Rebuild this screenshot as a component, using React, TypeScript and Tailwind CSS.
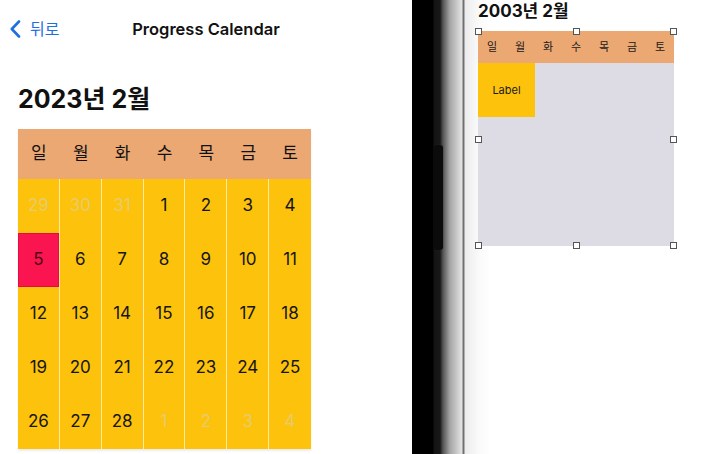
import React from 'react'

const FONT = { fontFamily: 'Inter, "Noto Sans CJK KR", sans-serif' }

const WEEKDAYS = ['일', '월', '화', '수', '목', '금', '토']

interface DayCell {
  label: number
  muted?: boolean
  today?: boolean
}

// Feb 2023 grid, padded with prev/next month days
const days: DayCell[] = [
  { label: 29, muted: true },
  { label: 30, muted: true },
  { label: 31, muted: true },
  ...Array.from({ length: 28 }, (_, i) => ({ label: i + 1, today: i + 1 === 5 })),
  { label: 1, muted: true },
  { label: 2, muted: true },
  { label: 3, muted: true },
  { label: 4, muted: true },
]

function BackButton() {
  return (
    <div className="flex items-center gap-[9px] pl-[10px] text-[#1f6fe0]">
      <svg width="11" height="18" viewBox="0 0 11 18" fill="none">
        <path d="M9 1.5L1.8 9L9 16.5" stroke="currentColor" strokeWidth="2.6" strokeLinecap="round" strokeLinejoin="round" />
      </svg>
      <span className="text-[16px] leading-none">뒤로</span>
    </div>
  )
}

function Calendar() {
  return (
    <div className="ml-[18px] w-[293px] shadow-[0_2px_2px_rgba(0,0,0,0.08)]">
      <div className="grid h-[50px] grid-cols-7 items-center bg-[#eca873]">
        {WEEKDAYS.map((d) => (
          <div key={d} className="text-center text-[17px] text-[#111]">
            {d}
          </div>
        ))}
      </div>
      <div className="grid grid-cols-7 bg-[#fdc20c]">
        {days.map((day, i) => {
          const lastCol = i % 7 === 6
          return (
            <div
              key={i}
              className={`flex h-[54px] items-center justify-center text-[17px] ${
                lastCol ? '' : 'border-r border-[#fde9a6]'
              } ${day.today ? 'bg-[#fa1450] text-[#4a0515] shadow-[inset_0_0_0_1px_#e00e45]' : ''} ${
                day.muted ? 'text-[#e8cb6a]' : day.today ? '' : 'text-[#151515]'
              }`}
            >
              {day.label}
            </div>
          )
        })}
      </div>
    </div>
  )
}

function Handle({ className }: { className: string }) {
  return <div className={`absolute h-[7px] w-[7px] border border-[#555] bg-white ${className}`} />
}

function StoryboardPanel() {
  return (
    <div className="flex-1 bg-[linear-gradient(to_right,#ececec,#fafafa_14px,#ffffff_26px)] pl-[13px]">
      <div className="h-[31px] text-[17px] font-bold leading-[22px] text-[#111]">2003년 2월</div>
      <div className="relative w-[196px]">
        <div className="grid h-[32px] grid-cols-7 items-center bg-[#eca873]">
          {WEEKDAYS.map((d) => (
            <div key={d} className="text-center text-[11px] text-[#1a1a1a]">
              {d}
            </div>
          ))}
        </div>
        <div className="h-[183px] bg-[#dddce4]">
          <div className="flex h-[54px] w-[57px] items-center justify-center bg-[#fdc20c] text-[11px] text-[#1a1a1a]">
            Label
          </div>
        </div>
        <Handle className="-left-[3px] -top-[3px]" />
        <Handle className="left-[95px] -top-[3px]" />
        <Handle className="-right-[3px] -top-[3px]" />
        <Handle className="-left-[3px] top-[105px]" />
        <Handle className="-right-[3px] top-[105px]" />
        <Handle className="-left-[3px] -bottom-[3px]" />
        <Handle className="left-[95px] -bottom-[3px]" />
        <Handle className="-right-[3px] -bottom-[3px]" />
      </div>
    </div>
  )
}

export default function App() {
  return (
    <div className="flex h-[454px] w-[707px] overflow-hidden bg-white" style={FONT}>
      {/* Simulator screen */}
      <div className="w-[412px] flex-none">
        <div className="grid h-[58px] grid-cols-[1fr_auto_1fr] items-center">
          <BackButton />
          <div className="text-[16.5px] font-semibold text-[#111]">Progress Calendar</div>
          <div />
        </div>
        <div className="flex h-[71px] items-center pl-[18px] pt-[13px] text-[25px] font-bold text-[#111]">
          2023년 2월
        </div>
        <Calendar />
      </div>

      {/* Device bezel */}
      <div className="relative w-[53px] flex-none bg-[linear-gradient(to_right,#000_0px,#000_21px,#141414_22px,#181818_28px,#555_31px,#a6a6a6_38px,#cfcfcf_46px,#e4e4e4_50px,#6f6f6f_51px,#6f6f6f_52px,#f0f0f0_53px)]">
        <div className="absolute left-[21px] top-[145px] h-[105px] w-[10px] rounded-[3px] bg-[#0b0b0b] shadow-[1px_0_1px_rgba(80,80,80,0.6)]" />
      </div>

      <StoryboardPanel />
    </div>
  )
}
